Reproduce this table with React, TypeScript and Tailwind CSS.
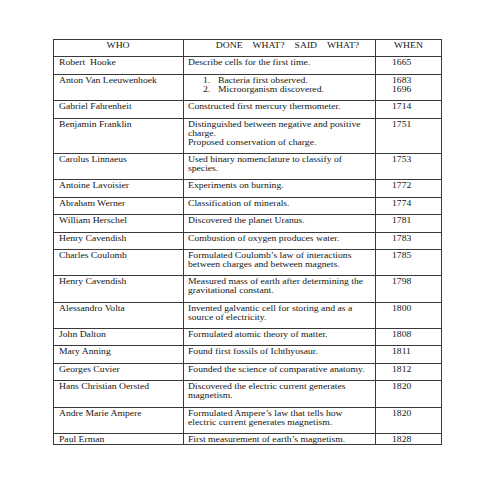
type Row = {
  who: string;
  what: string[];
  when: string[];
  list?: boolean;
};

const ROWS: Row[] = [
  { who: 'Robert\u00a0 Hooke', what: ['Describe cells for the first time.'], when: ['1665'] },
  {
    who: 'Anton Van Leeuwenhoek',
    what: ['Bacteria first observed.', 'Microorganism discovered.'],
    when: ['1683', '1696'],
    list: true,
  },
  { who: 'Gabriel Fahrenheit', what: ['Constructed first mercury thermometer.'], when: ['1714'] },
  {
    who: 'Benjamin Franklin',
    what: ['Distinguished between negative and positive', 'charge.', 'Proposed conservation of charge.'],
    when: ['1751'],
  },
  { who: 'Carolus Linnaeus', what: ['Used binary nomenclature to classify of', 'species.'], when: ['1753'] },
  { who: 'Antoine Lavoisier', what: ['Experiments on burning.'], when: ['1772'] },
  { who: 'Abraham Werner', what: ['Classification of minerals.'], when: ['1774'] },
  { who: 'William Herschel', what: ['Discovered the planet Uranus.'], when: ['1781'] },
  { who: 'Henry Cavendish', what: ['Combustion of oxygen produces water.'], when: ['1783'] },
  {
    who: 'Charles Coulomb',
    what: ['Formulated Coulomb\u2019s law of interactions', 'between charges and between magnets.'],
    when: ['1785'],
  },
  {
    who: 'Henry Cavendish',
    what: ['Measured mass of earth after determining the', 'gravitational constant.'],
    when: ['1798'],
  },
  {
    who: 'Alessandro Volta',
    what: ['Invented galvantic cell for storing and as a', 'source of electricity.'],
    when: ['1800'],
  },
  { who: 'John Dalton', what: ['Formulated atomic theory of matter.'], when: ['1808'] },
  { who: 'Mary Anning', what: ['Found first fossils of Ichthyosaur.'], when: ['1811'] },
  { who: 'Georges Cuvier', what: ['Founded the science of comparative anatomy.'], when: ['1812'] },
  {
    who: 'Hans Christian Oersted',
    what: ['Discovered the electric current generates', 'magnetism.'],
    when: ['1820'],
  },
  {
    who: 'Andre Marie Ampere',
    what: ['Formulated Ampere\u2019s law that tells how', 'electric current generates magnetism.'],
    when: ['1820'],
  },
  { who: 'Paul Erman', what: ['First measurement of earth\u2019s magnetism.'], when: ['1828'] },
];

// the scanned page is squashed vertically, so text runs wide
function T({ children, center }: { children: React.ReactNode; center?: boolean }) {
  return (
    <span className={`inline-block scale-x-[1.27] ${center ? 'origin-center' : 'origin-left'}`}>{children}</span>
  );
}

export default function App() {
  return (
    <div className="w-[495px] h-[495px] bg-white pt-[39px] pl-[53px] font-['Liberation_Serif','Times_New_Roman',serif] text-[7.6px] leading-[9px] text-[#151515]">
      <table className="table-fixed border-collapse w-[388px] border border-[#3a3a3a]">
        <colgroup>
          <col className="w-[130px]" />
          <col className="w-[192px]" />
          <col className="w-[66px]" />
        </colgroup>
        <thead>
          <tr>
            <th className="border border-[#3a3a3a] font-normal text-center align-top pt-[1px] pb-[6.4px]">
              <T center>WHO</T>
            </th>
            <th className="border border-[#3a3a3a] font-normal text-center align-top pt-[1px] pb-[6.4px] pl-[15px] whitespace-nowrap [word-spacing:6px]">
              <T center>DONE WHAT? SAID WHAT?</T>
            </th>
            <th className="border border-[#3a3a3a] font-normal text-center align-top pt-[1px] pb-[6.4px]">
              <T center>WHEN</T>
            </th>
          </tr>
        </thead>
        <tbody>
          {ROWS.map((r, i) => {
            const last = i === ROWS.length - 1;
            const pad = last ? 'pt-[0.5px] pb-0' : 'pt-[1px] pb-[6.4px]';
            return (
              <tr key={i}>
                <td className={`border border-[#3a3a3a] align-top pl-[4.5px] whitespace-nowrap ${pad}`}>
                  <T>{r.who}</T>
                </td>
                <td className={`border border-[#3a3a3a] align-top pl-[4px] whitespace-nowrap ${pad}`}>
                  {r.what.map((line, j) =>
                    r.list ? (
                      <div key={j} className="flex">
                        <span className="w-[29.5px] pl-[14.5px]">
                          <T>{j + 1}.</T>
                        </span>
                        <T>{line}</T>
                      </div>
                    ) : (
                      <div key={j}>
                        <T>{line}</T>
                      </div>
                    )
                  )}
                </td>
                <td className={`border border-[#3a3a3a] align-top pl-[16px] whitespace-nowrap ${pad}`}>
                  {r.when.map((y, j) => (
                    <div key={j}>
                      <T>{y}</T>
                    </div>
                  ))}
                </td>
              </tr>
            );
          })}
        </tbody>
      </table>
    </div>
  );
}
